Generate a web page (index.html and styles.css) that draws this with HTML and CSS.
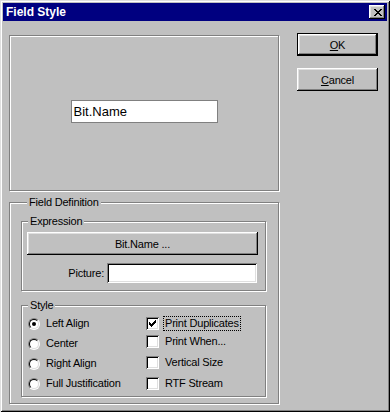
FILE: index.html
```html
<!DOCTYPE html>
<html lang="en">
<head>
    <meta charset="UTF-8">
    <title>Field Style</title>
    <link rel="stylesheet" href="styles.css">
</head>
<body>
    <div class="window">
        <div class="titlebar">
            <span class="title">Field Style</span>
            <button class="close" type="button">
                <svg width="8" height="7" viewBox="0 0 8 7" shape-rendering="crispEdges">
                    <path d="M0 0h2v1h-2z M6 0h2v1h-2z M1 1h2v1h-2z M5 1h2v1h-2z M2 2h4v1h-4z M3 3h2v1h-2z M2 4h4v1h-4z M1 5h2v1h-2z M5 5h2v1h-2z M0 6h2v1h-2z M6 6h2v1h-2z" fill="#000"/>
                </svg>
            </button>
        </div>

        <div class="client">
            <div class="left">
                <div class="preview">
                    <div class="preview-field">Bit.Name</div>
                </div>

                <div class="group group-def">
                    <span class="legend">Field Definition</span>

                    <div class="group group-expr">
                        <span class="legend">Expression</span>
                        <button class="btn btn-expr" type="button">Bit.Name ...</button>
                        <div class="picture-row">
                            <label>Picture:</label>
                            <span class="textbox"></span>
                        </div>
                    </div>

                    <div class="group group-style">
                        <span class="legend">Style</span>
                        <div class="style-cols">
                            <ul class="radios">
                                <li class="opt"><span class="radio checked"></span><span class="opt-text">Left Align</span></li>
                                <li class="opt"><span class="radio"></span><span class="opt-text">Center</span></li>
                                <li class="opt"><span class="radio"></span><span class="opt-text">Right Align</span></li>
                                <li class="opt"><span class="radio"></span><span class="opt-text">Full Justification</span></li>
                            </ul>
                            <ul class="checks">
                                <li class="opt">
                                    <span class="check">
                                        <svg width="13" height="13" viewBox="0 0 13 13" shape-rendering="crispEdges">
                                            <path d="M3 5h1v3h-1z M4 6h1v3h-1z M5 7h1v3h-1z M6 6h1v3h-1z M7 5h1v3h-1z M8 4h1v3h-1z M9 3h1v3h-1z" fill="#000"/>
                                        </svg>
                                    </span>
                                    <span class="opt-text focus">Print Duplicates</span>
                                </li>
                                <li class="opt"><span class="check"></span><span class="opt-text">Print When...</span></li>
                                <li class="opt"><span class="check"></span><span class="opt-text">Vertical Size</span></li>
                                <li class="opt"><span class="check"></span><span class="opt-text">RTF Stream</span></li>
                            </ul>
                        </div>
                    </div>
                </div>
            </div>

            <div class="actions">
                <button class="btn btn-default" type="button"><u>O</u>K</button>
                <button class="btn" type="button"><u>C</u>ancel</button>
            </div>
        </div>
    </div>
</body>
</html>
```

FILE: styles.css
```css
* {
    box-sizing: border-box;
}

body {
    margin: 0;
    font-family: 'Liberation Sans', Arial, sans-serif;
    font-size: 11px;
    letter-spacing: -0.2px;
    color: #000;
    background: #c0c0c0;
}

.window {
    width: 390px;
    height: 412px;
    padding: 3px;
    background: #c0c0c0;
    box-shadow: inset 1px 1px #dfdfdf, inset -1px -1px #000,
                inset 2px 2px #fff, inset -2px -2px #808080;
}

.titlebar {
    display: flex;
    align-items: center;
    height: 18px;
    padding-left: 3px;
    background: #000080;
    color: #fff;
}

.title {
    font-size: 12px;
    font-weight: bold;
    letter-spacing: 0;
}

.close {
    display: flex;
    align-items: center;
    justify-content: center;
    width: 16px;
    height: 14px;
    margin-left: auto;
    margin-right: 2px;
    padding: 0 0 0 1px;
    border: none;
    background: #c0c0c0;
    box-shadow: inset -1px -1px #000, inset 1px 1px #fff,
                inset -2px -2px #808080, inset 2px 2px #dfdfdf;
}

.close svg {
    display: block;
}

.client {
    display: flex;
    gap: 18px;
    padding: 14px 9px 0 6px;
}

.left {
    width: 270px;
}

/* etched frames */
.preview,
.group {
    border: 1px solid #808080;
    box-shadow: inset 1px 1px #fff, 1px 1px #fff;
}

.preview {
    display: flex;
    align-items: center;
    justify-content: center;
    height: 156px;
    padding-bottom: 3px;
}

.preview-field {
    width: 147px;
    height: 23px;
    padding-left: 2px;
    border: 1px solid #808080;
    background: #fff;
    font-size: 13px;
    line-height: 21px;
    letter-spacing: 0;
}

.legend {
    display: block;
    width: fit-content;
    height: 13px;
    margin: -7px 0 0 6px;
    padding: 0 2px;
    line-height: 13px;
    background: #c0c0c0;
}

.group-def {
    margin-top: 11px;
    padding: 0 12px 6px 11px;
}

.group-expr {
    margin-top: 12px;
    padding-bottom: 7px;
}

.group-style {
    margin-top: 14px;
    padding-bottom: 6px;
}

.btn {
    height: 23px;
    padding: 0;
    border: none;
    background: #c0c0c0;
    font-family: inherit;
    font-size: 11px;
    letter-spacing: -0.2px;
    color: #000;
    box-shadow: inset -1px -1px #000, inset 1px 1px #fff,
                inset -2px -2px #808080, inset 2px 2px #dfdfdf;
}

.btn-expr {
    display: block;
    width: 231px;
    margin: 4px 0 0 5px;
}

.picture-row {
    display: flex;
    align-items: center;
    justify-content: flex-end;
    gap: 3px;
    margin-top: 8px;
    padding-right: 8px;
}

.textbox {
    width: 150px;
    height: 20px;
    background: #fff;
    box-shadow: inset 1px 1px #808080, inset -1px -1px #fff,
                inset 2px 2px #000, inset -2px -2px #dfdfdf;
}

.style-cols {
    display: flex;
    padding: 5px 0 0 6px;
}

.radios,
.checks {
    list-style: none;
    margin: 0;
    padding: 0;
}

.radios {
    width: 118px;
}

.opt {
    display: flex;
    align-items: center;
    height: 13px;
    line-height: 13px;
}

.radios .opt + .opt {
    margin-top: 7px;
}

.checks .opt:nth-child(2) {
    margin-top: 5px;
}

.checks .opt:nth-child(3),
.checks .opt:nth-child(4) {
    margin-top: 8px;
}

.radio {
    position: relative;
    width: 12px;
    height: 12px;
    border-radius: 50%;
    border: 1px solid;
    border-color: #808080 #fff #fff #808080;
    background: #dfdfdf;
}

.radio::before {
    content: '';
    position: absolute;
    inset: 0;
    border-radius: 50%;
    border: 1px solid;
    border-color: #000 #dfdfdf #dfdfdf #000;
    background: #fff;
}

.radio.checked::after {
    content: '';
    position: absolute;
    left: 3px;
    top: 3px;
    width: 4px;
    height: 4px;
    border-radius: 50%;
    background: #000;
}

.radios .opt-text {
    margin-left: 6px;
}

.check {
    width: 13px;
    height: 13px;
    background: #fff;
    box-shadow: inset 1px 1px #808080, inset -1px -1px #fff,
                inset 2px 2px #000, inset -2px -2px #dfdfdf;
}

.check svg {
    display: block;
}

.checks .opt-text {
    margin-left: 4px;
    padding: 0 1px;
    border: 1px dotted transparent;
    line-height: 13px;
}

.checks .opt-text.focus {
    border-color: #000;
}

.actions {
    display: flex;
    flex-direction: column;
    gap: 12px;
    margin-top: -2px;
}

.actions .btn {
    width: 81px;
}

.btn-default {
    border: 1px solid #000;
}
```
